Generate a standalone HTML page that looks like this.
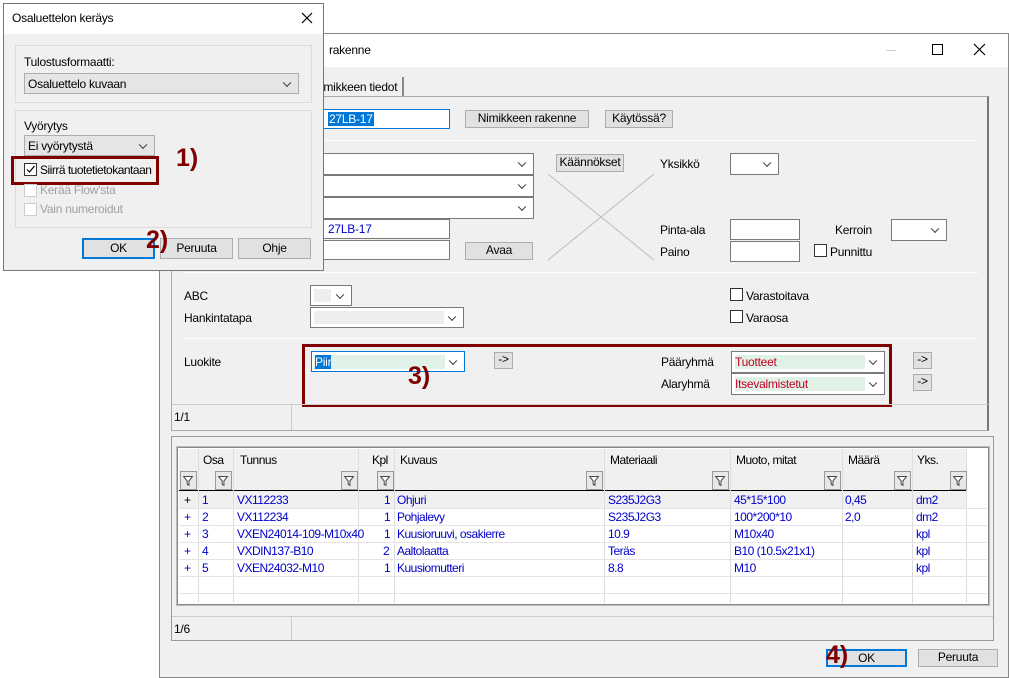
<!DOCTYPE html>
<html><head><meta charset="utf-8"><style>
*{box-sizing:border-box}
body{margin:0;width:1009px;height:678px;position:relative;background:#fff;font-family:"Liberation Sans",sans-serif;font-size:12px;color:#000;overflow:hidden;letter-spacing:-0.25px}
.a{position:absolute;white-space:nowrap}
.btn{position:absolute;background:#e1e1e1;border:1px solid #adadad;text-align:center;line-height:15px}
.inp{position:absolute;background:#fff;border:1px solid #7a7a7a}
.dd{position:absolute;background:#fff;border:1px solid #7a7a7a}
.dd:after{content:"";position:absolute;right:8px;top:50%;width:5px;height:5px;border-right:1px solid #333;border-bottom:1px solid #333;transform:translateY(-70%) rotate(45deg)}
.cb{position:absolute;width:13px;height:13px;border:1px solid #333;background:#fff}
.hl{position:absolute;height:1px;background:#a0a0a0;border-bottom:1px solid #fff}
.red{position:absolute;border:3px solid #800000}
.num{position:absolute;color:#800000;font-weight:bold;font-size:25px;letter-spacing:0}
.g{position:absolute;font-size:12px;color:#00c;white-space:nowrap;letter-spacing:-0.5px}
.gh{position:absolute;font-size:12px;white-space:nowrap;letter-spacing:-0.5px}
.f{position:absolute;width:17px;height:19px;background:#e8e8e8;border:1px solid #999}
.f:after{content:"";position:absolute;left:3px;top:4px;width:9px;height:9px;background:linear-gradient(#fff,#fff) 3px 5px/3px 5px no-repeat;}
</style></head><body>

<!-- main window -->
<div class="a" style="left:159px;top:33px;width:850px;height:645px;background:#f0f0f0;border:1px solid #888"></div>
<div class="a" style="left:160px;top:34px;width:848px;height:33px;background:#fff"></div>
<div class="a" style="left:329px;top:43px;font-size:12px">rakenne</div>
<div class="a" style="left:886px;top:50px;width:10px;height:1px;background:#ccc"></div>
<div class="a" style="left:932px;top:44px;width:11px;height:11px;border:1px solid #000"></div>
<svg class="a" style="left:973px;top:43px" width="13" height="13"><path d="M1 1L12 12M12 1L1 12" stroke="#000" stroke-width="1.2"/></svg>

<!-- tab -->
<div class="a" style="left:318px;top:77px;width:86px;height:20px;border-right:2px solid #888;background:#f0f0f0"></div>
<div class="a" style="left:321px;top:80px">imikkeen tiedot</div>
<div class="a" style="left:171px;top:96px;width:818px;height:335px;border:1px solid #aaa;border-right:2px solid #777;background:#f0f0f0"></div>

<div class="inp" style="left:318px;top:109px;width:132px;height:20px;border-color:#0078d7"></div>
<div class="a" style="left:328px;top:112px;background:#0078d7;color:#fff;padding:0 1px">27LB-17</div>
<div class="btn" style="left:465px;top:110px;width:124px;height:18px">Nimikkeen rakenne</div>
<div class="btn" style="left:605px;top:110px;width:68px;height:18px">Käytössä?</div>
<div class="hl" style="left:318px;top:140px;width:660px"></div>

<div class="dd" style="left:318px;top:153px;width:216px;height:22px"></div>
<div class="dd" style="left:318px;top:175px;width:216px;height:22px"></div>
<div class="dd" style="left:318px;top:197px;width:216px;height:22px"></div>
<div class="inp" style="left:318px;top:219px;width:132px;height:20px"></div>
<div class="a" style="left:328px;top:222px;color:#00c">27LB-17</div>
<div class="inp" style="left:318px;top:240px;width:132px;height:20px"></div>
<div class="btn" style="left:465px;top:242px;width:68px;height:18px">Avaa</div>
<div class="btn" style="left:556px;top:154px;width:68px;height:18px">Käännökset</div>
<svg class="a" style="left:548px;top:174px" width="108" height="88"><line x1="0" y1="0" x2="106" y2="86" stroke="#bbb"/><line x1="106" y1="0" x2="0" y2="86" stroke="#bbb"/></svg>
<div class="a" style="left:660px;top:157px">Yksikkö</div>
<div class="dd" style="left:730px;top:153px;width:49px;height:22px"></div>
<div class="a" style="left:660px;top:223px">Pinta-ala</div>
<div class="inp" style="left:730px;top:219px;width:70px;height:21px"></div>
<div class="a" style="left:660px;top:245px">Paino</div>
<div class="inp" style="left:730px;top:241px;width:70px;height:21px"></div>
<div class="a" style="left:835px;top:223px">Kerroin</div>
<div class="dd" style="left:891px;top:219px;width:56px;height:22px"></div>
<div class="cb" style="left:814px;top:244px"></div>
<div class="a" style="left:830px;top:245px">Punnittu</div>
<div class="hl" style="left:183px;top:272px;width:795px"></div>

<div class="a" style="left:184px;top:289px">ABC</div>
<div class="dd" style="left:310px;top:285px;width:42px;height:21px"></div>
<div class="a" style="left:314px;top:289px;width:17px;height:13px;background:#eee"></div>
<div class="a" style="left:184px;top:311px">Hankintatapa</div>
<div class="dd" style="left:310px;top:307px;width:154px;height:21px"></div>
<div class="a" style="left:314px;top:311px;width:130px;height:13px;background:#eee"></div>
<div class="cb" style="left:730px;top:288px"></div><div class="a" style="left:746px;top:289px">Varastoitava</div>
<div class="cb" style="left:730px;top:310px"></div><div class="a" style="left:746px;top:311px">Varaosa</div>
<div class="hl" style="left:183px;top:338px;width:795px"></div>

<div class="a" style="left:184px;top:355px">Luokite</div>
<div class="dd" style="left:311px;top:351px;width:154px;height:21px;border-color:#0078d7"></div>
<div class="a" style="left:314px;top:355px;width:131px;height:14px;background:#e0f2e8"></div>
<div class="a" style="left:315px;top:355px;background:#0078d7;color:#fff">Piir</div>
<div class="btn" style="left:494px;top:352px;width:19px;height:17px;line-height:13px">-&gt;</div>
<div class="a" style="left:661px;top:355px">Pääryhmä</div>
<div class="dd" style="left:731px;top:351px;width:154px;height:22px"></div>
<div class="a" style="left:735px;top:355px;width:130px;height:14px;background:#e0f2e8;color:#c00020;line-height:14px">Tuotteet</div>
<div class="a" style="left:661px;top:377px">Alaryhmä</div>
<div class="dd" style="left:731px;top:373px;width:154px;height:22px"></div>
<div class="a" style="left:735px;top:377px;width:130px;height:14px;background:#e0f2e8;color:#c00020;line-height:14px">Itsevalmistetut</div>
<div class="btn" style="left:913px;top:352px;width:19px;height:17px;line-height:13px">-&gt;</div>
<div class="btn" style="left:913px;top:374px;width:19px;height:17px;line-height:13px">-&gt;</div>
<div class="red" style="left:302px;top:344px;width:590px;height:63px"></div>
<div class="num" style="left:408px;top:362px">3)</div>

<div class="a" style="left:172px;top:404px;width:816px;height:1px;background:#ccc"></div>
<div class="a" style="left:291px;top:405px;width:1px;height:25px;background:#ccc"></div>
<div class="a" style="left:174px;top:410px">1/1</div>

<!-- grid panel -->
<div class="a" style="left:171px;top:436px;width:823px;height:205px;border:1px solid #999;background:#f0f0f0"></div>
<div class="a" style="left:177px;top:447px;width:812px;height:158px;border:1px solid #888;background:#fff;outline:1px solid #bbb"></div>
<div class="a" style="left:179px;top:449px;width:788px;height:42px;background:#f0f0f0;border-bottom:1px solid #000"></div>
<div class="a" style="left:179px;top:491px;width:788px;height:17px;background:#f0f0f0"></div>
<div class="a" style="left:198px;top:449px;width:1px;height:154px;background:#ddd"></div>
<div class="a" style="left:233px;top:449px;width:1px;height:154px;background:#ddd"></div>
<div class="a" style="left:358px;top:449px;width:1px;height:154px;background:#ddd"></div>
<div class="a" style="left:394px;top:449px;width:1px;height:154px;background:#ddd"></div>
<div class="a" style="left:604px;top:449px;width:1px;height:154px;background:#ddd"></div>
<div class="a" style="left:730px;top:449px;width:1px;height:154px;background:#ddd"></div>
<div class="a" style="left:842px;top:449px;width:1px;height:154px;background:#ddd"></div>
<div class="a" style="left:912px;top:449px;width:1px;height:154px;background:#ddd"></div>
<div class="a" style="left:966px;top:449px;width:1px;height:154px;background:#ddd"></div>
<div class="a" style="left:179px;top:508px;width:808px;height:1px;background:#e4e4e4"></div>
<div class="a" style="left:179px;top:525px;width:808px;height:1px;background:#e4e4e4"></div>
<div class="a" style="left:179px;top:542px;width:808px;height:1px;background:#e4e4e4"></div>
<div class="a" style="left:179px;top:559px;width:808px;height:1px;background:#e4e4e4"></div>
<div class="a" style="left:179px;top:576px;width:808px;height:1px;background:#e4e4e4"></div>
<div class="a" style="left:179px;top:593px;width:808px;height:1px;background:#e4e4e4"></div>

<div class="gh" style="left:203px;top:453px">Osa</div>
<div class="gh" style="left:240px;top:453px">Tunnus</div>
<div class="gh" style="left:372px;top:453px">Kpl</div>
<div class="gh" style="left:400px;top:453px">Kuvaus</div>
<div class="gh" style="left:610px;top:453px">Materiaali</div>
<div class="gh" style="left:736px;top:453px">Muoto, mitat</div>
<div class="gh" style="left:848px;top:453px">Määrä</div>
<div class="gh" style="left:917px;top:453px">Yks.</div>
<svg width="0" height="0" style="position:absolute"><defs><symbol id="fn" viewBox="0 0 17 19"><path d="M3 5H13L9 10V15L7 14V10Z" fill="#fff" stroke="#333"/></symbol></defs></svg>
<svg class="a" style="left:180px;top:471px;background:#e8e8e8;border:1px solid #999" width="17" height="19"><use href="#fn"/></svg>
<svg class="a" style="left:215px;top:471px;background:#e8e8e8;border:1px solid #999" width="17" height="19"><use href="#fn"/></svg>
<svg class="a" style="left:341px;top:471px;background:#e8e8e8;border:1px solid #999" width="17" height="19"><use href="#fn"/></svg>
<svg class="a" style="left:377px;top:471px;background:#e8e8e8;border:1px solid #999" width="17" height="19"><use href="#fn"/></svg>
<svg class="a" style="left:586px;top:471px;background:#e8e8e8;border:1px solid #999" width="17" height="19"><use href="#fn"/></svg>
<svg class="a" style="left:712px;top:471px;background:#e8e8e8;border:1px solid #999" width="17" height="19"><use href="#fn"/></svg>
<svg class="a" style="left:824px;top:471px;background:#e8e8e8;border:1px solid #999" width="17" height="19"><use href="#fn"/></svg>
<svg class="a" style="left:894px;top:471px;background:#e8e8e8;border:1px solid #999" width="17" height="19"><use href="#fn"/></svg>
<svg class="a" style="left:950px;top:471px;background:#e8e8e8;border:1px solid #999" width="17" height="19"><use href="#fn"/></svg>

<div class="gh" style="left:184px;top:493px">+</div><div class="g" style="left:202px;top:493px">1</div><div class="g" style="left:237px;top:493px">VX112233</div><div class="g" style="left:384px;top:493px">1</div><div class="g" style="left:397px;top:493px">Ohjuri</div><div class="g" style="left:608px;top:493px">S235J2G3</div><div class="g" style="left:734px;top:493px">45*15*100</div><div class="g" style="left:845px;top:493px">0,45</div><div class="g" style="left:916px;top:493px">dm2</div>
<div class="g" style="left:184px;top:510px">+</div><div class="g" style="left:202px;top:510px">2</div><div class="g" style="left:237px;top:510px">VX112234</div><div class="g" style="left:384px;top:510px">1</div><div class="g" style="left:397px;top:510px">Pohjalevy</div><div class="g" style="left:608px;top:510px">S235J2G3</div><div class="g" style="left:734px;top:510px">100*200*10</div><div class="g" style="left:845px;top:510px">2,0</div><div class="g" style="left:916px;top:510px">dm2</div>
<div class="g" style="left:184px;top:527px">+</div><div class="g" style="left:202px;top:527px">3</div><div class="g" style="left:237px;top:527px">VXEN24014-109-M10x40</div><div class="g" style="left:384px;top:527px">1</div><div class="g" style="left:397px;top:527px">Kuusioruuvi, osakierre</div><div class="g" style="left:608px;top:527px">10.9</div><div class="g" style="left:734px;top:527px">M10x40</div><div class="g" style="left:916px;top:527px">kpl</div>
<div class="g" style="left:184px;top:544px">+</div><div class="g" style="left:202px;top:544px">4</div><div class="g" style="left:237px;top:544px">VXDIN137-B10</div><div class="g" style="left:383px;top:544px">2</div><div class="g" style="left:397px;top:544px">Aaltolaatta</div><div class="g" style="left:608px;top:544px">Teräs</div><div class="g" style="left:734px;top:544px">B10 (10.5x21x1)</div><div class="g" style="left:916px;top:544px">kpl</div>
<div class="g" style="left:184px;top:561px">+</div><div class="g" style="left:202px;top:561px">5</div><div class="g" style="left:237px;top:561px">VXEN24032-M10</div><div class="g" style="left:384px;top:561px">1</div><div class="g" style="left:397px;top:561px">Kuusiomutteri</div><div class="g" style="left:608px;top:561px">8.8</div><div class="g" style="left:734px;top:561px">M10</div><div class="g" style="left:916px;top:561px">kpl</div>

<div class="a" style="left:172px;top:616px;width:821px;height:1px;background:#ccc"></div>
<div class="a" style="left:291px;top:617px;width:1px;height:23px;background:#ccc"></div>
<div class="a" style="left:174px;top:622px">1/6</div>

<div class="btn" style="left:826px;top:649px;width:81px;height:18px;border:2px solid #0078d7;line-height:14px">OK</div>
<div class="btn" style="left:918px;top:649px;width:80px;height:18px">Peruuta</div>
<div class="num" style="left:826px;top:641px">4)</div>

<!-- small dialog -->
<div class="a" style="left:3px;top:3px;width:321px;height:268px;background:#f0f0f0;border:1px solid #777"></div>
<div class="a" style="left:4px;top:4px;width:319px;height:30px;background:#fff"></div>
<div class="a" style="left:12px;top:11px">Osaluettelon keräys</div>
<svg class="a" style="left:301px;top:12px" width="12" height="12"><path d="M1 1L11 11M11 1L1 11" stroke="#000" stroke-width="1.2"/></svg>
<div class="a" style="left:15px;top:45px;width:297px;height:58px;border:1px solid #dcdcdc"></div>
<div class="a" style="left:24px;top:55px">Tulostusformaatti:</div>
<div class="dd" style="left:24px;top:73px;width:275px;height:21px;background:#e5e5e5;border-color:#adadad"></div>
<div class="a" style="left:28px;top:77px">Osaluettelo kuvaan</div>
<div class="a" style="left:15px;top:110px;width:297px;height:118px;border:1px solid #dcdcdc"></div>
<div class="a" style="left:24px;top:119px">Vyörytys</div>
<div class="dd" style="left:24px;top:135px;width:131px;height:21px;background:#e5e5e5;border-color:#adadad"></div>
<div class="a" style="left:28px;top:139px">Ei vyörytystä</div>
<div class="cb" style="left:24px;top:163px"></div>
<svg class="a" style="left:24px;top:163px" width="13" height="13"><path d="M3 6.5L5.5 9L10.5 3" stroke="#000" stroke-width="1.2" fill="none"/></svg>
<div class="a" style="left:40px;top:163px;letter-spacing:-0.5px">Siirrä tuotetietokantaan</div>
<div class="red" style="left:11px;top:156px;width:148px;height:29px"></div>
<div class="cb" style="left:24px;top:184px;border-color:#ccc"></div>
<div class="a" style="left:40px;top:183px;color:#a0a0a0">Kerää Flow'sta</div>
<div class="cb" style="left:24px;top:203px;border-color:#ccc"></div>
<div class="a" style="left:40px;top:202px;color:#a0a0a0">Vain numeroidut</div>
<div class="num" style="left:176px;top:144px">1)</div>
<div class="btn" style="left:82px;top:238px;width:73px;height:21px;border:2px solid #0078d7;line-height:17px">OK</div>
<div class="btn" style="left:160px;top:238px;width:73px;height:21px;line-height:19px">Peruuta</div>
<div class="btn" style="left:238px;top:238px;width:73px;height:21px;line-height:19px">Ohje</div>
<div class="num" style="left:146px;top:226px">2)</div>

</body></html>
